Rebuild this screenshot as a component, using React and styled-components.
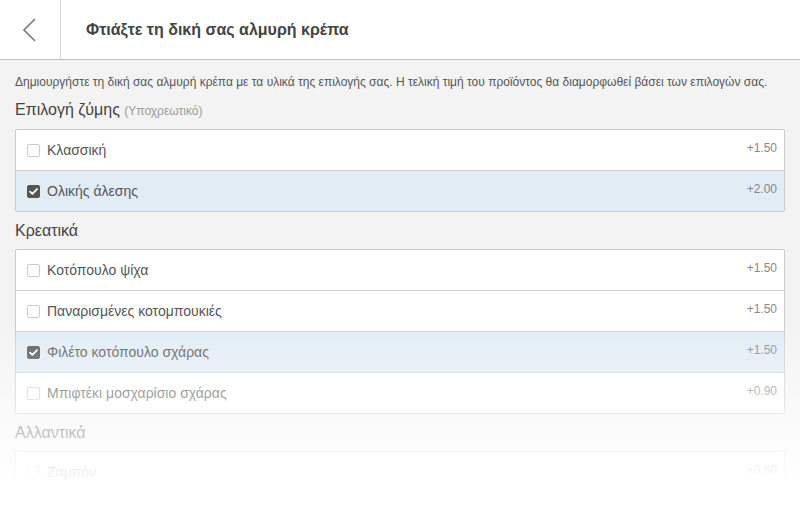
import styled, { createGlobalStyle } from "styled-components";

const Global = createGlobalStyle`
  html, body { margin: 0; padding: 0; background: #fff; }
  body { font-family: "Liberation Sans", Arial, sans-serif; }
`;

const sections = [
  {
    title: "Επιλογή ζύμης",
    note: "(Υποχρεωτικό)",
    items: [
      { name: "Κλασσική", price: "+1.50" },
      { name: "Ολικής άλεσης", price: "+2.00", checked: true },
    ],
  },
  {
    title: "Κρεατικά",
    items: [
      { name: "Κοτόπουλο ψίχα", price: "+1.50" },
      { name: "Παναρισμένες κοτομπουκιές", price: "+1.50" },
      { name: "Φιλέτο κοτόπουλο σχάρας", price: "+1.50", checked: true },
      { name: "Μπιφτέκι μοσχαρίσιο σχάρας", price: "+0.90" },
    ],
  },
  {
    title: "Αλλαντικά",
    items: [
      { name: "Ζαμπόν", price: "+0.60" },
      { name: "Μπέικον", price: "+0.60" },
    ],
  },
];

const Page = styled.div`
  width: 800px;
  height: 509px;
  display: flex;
  flex-direction: column;
  background: #fff;
  overflow: hidden;
`;

const Header = styled.div`
  height: 59px;
  flex: none;
  display: flex;
  border-bottom: 1px solid #bdbdbd;
  background: #fff;
`;

const BackButton = styled.div`
  width: 60px;
  border-right: 1px solid #d6d6d6;
  display: flex;
  align-items: center;
  justify-content: center;
  svg { display: block; }
`;

const Title = styled.h1`
  margin: 0;
  padding-left: 25px;
  display: flex;
  align-items: center;
  font-size: 16px;
  font-weight: bold;
  color: #444;
`;

const Body = styled.div`
  position: relative;
  height: 420px;
  flex: none;
  overflow: hidden;
  background: #f3f3f3;
  padding: 14px 15px 0;
  box-sizing: border-box;
`;

const Fade = styled.div`
  position: absolute;
  left: 0;
  right: 0;
  bottom: 0;
  height: 160px;
  background: linear-gradient(rgba(255, 255, 255, 0), rgba(255, 255, 255, 0.95));
  pointer-events: none;
`;

const Intro = styled.p`
  margin: 0 0 1px;
  font-size: 12px;
  line-height: 16px;
  white-space: nowrap;
  color: #555;
`;

const SectionTitle = styled.h2`
  margin: 0;
  padding: 9px 0 8px;
  font-size: 16px;
  line-height: 20px;
  font-weight: normal;
  color: #444;
  span {
    font-size: 12px;
    color: #999;
  }
`;

const Group = styled.div`
  background: #fff;
  border: 1px solid #ccc;
  border-radius: 2px;
`;

const Row = styled.div`
  height: 40px;
  display: flex;
  align-items: flex-start;
  padding: 0 7px 0 11px;
  background: ${(p) => (p.$checked ? "#e1ecf5" : "#fff")};
  & + & { border-top: 1px solid #d0d0d0; }
`;

const Box = styled.span`
  width: 13px;
  height: 13px;
  margin-top: 14px;
  margin-right: 7px;
  box-sizing: border-box;
  border-radius: 2px;
  border: 1px solid ${(p) => (p.$checked ? "#555" : "#ccc")};
  background: ${(p) => (p.$checked ? "#555" : "#fff")};
  display: flex;
  align-items: center;
  justify-content: center;
  flex: none;
`;

const Label = styled.span`
  flex: 1;
  font-size: 14px;
  line-height: 40px;
  color: #555;
`;

const Price = styled.span`
  font-size: 12px;
  line-height: 14px;
  padding-top: 11px;
  color: #888;
`;

const Option = ({ name, price, checked }) => (
  <Row $checked={checked}>
    <Box $checked={checked}>
      {checked && (
        <svg width="9" height="7" viewBox="0 0 9 7">
          <path d="M1 3.6 L3.4 5.8 L8 1.2" fill="none" stroke="#fff" strokeWidth="1.8" strokeLinecap="round" strokeLinejoin="round" />
        </svg>
      )}
    </Box>
    <Label>{name}</Label>
    <Price>{price}</Price>
  </Row>
);

const Footer = styled.div`
  flex: 1;
  background: #fff;
`;

export default function App() {
  return (
    <Page>
      <Global />
      <Header>
        <BackButton>
          <svg width="16" height="24" viewBox="0 0 16 24">
            <path d="M13 1 L2 12 L13 23" fill="none" stroke="#777" strokeWidth="1.6" />
          </svg>
        </BackButton>
        <Title>Φτιάξτε τη δική σας αλμυρή κρέπα</Title>
      </Header>
      <Body>
        <Intro>
          Δημιουργήστε τη δική σας αλμυρή κρέπα με τα υλικά της επιλογής σας. Η τελική τιμή του προϊόντος θα διαμορφωθεί βάσει των επιλογών σας.
        </Intro>
        {sections.map((s) => (
          <div key={s.title}>
            <SectionTitle>
              {s.title} {s.note && <span>{s.note}</span>}
            </SectionTitle>
            <Group>
              {s.items.map((it) => (
                <Option key={it.name} {...it} />
              ))}
            </Group>
          </div>
        ))}
        <Fade />
      </Body>
      <Footer />
    </Page>
  );
}
